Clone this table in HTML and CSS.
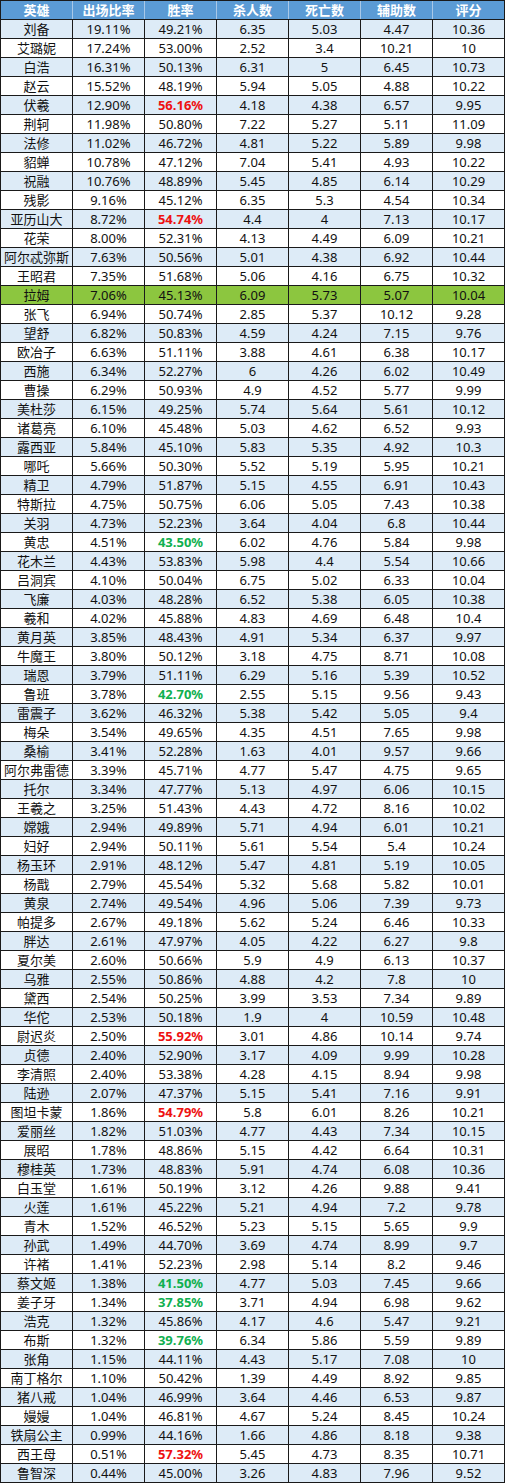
FILE: index.html
```html
<!DOCTYPE html>
<html lang="zh">
<head>
<meta charset="utf-8">
<title>英雄数据</title>
<link rel="stylesheet" href="styles.css">
</head>
<body>
<div class="tbl">
<div class="row hd"><div>英雄</div><div>出场比率</div><div>胜率</div><div>杀人数</div><div>死亡数</div><div>辅助数</div><div>评分</div></div>
<div class="row s"><div>刘备</div><div>19.11%</div><div>49.21%</div><div>6.35</div><div>5.03</div><div>4.47</div><div>10.36</div></div>
<div class="row"><div>艾璐妮</div><div>17.24%</div><div>53.00%</div><div>2.52</div><div>3.4</div><div>10.21</div><div>10</div></div>
<div class="row s"><div>白浩</div><div>16.31%</div><div>50.13%</div><div>6.31</div><div>5</div><div>6.45</div><div>10.73</div></div>
<div class="row"><div>赵云</div><div>15.52%</div><div>48.19%</div><div>5.94</div><div>5.05</div><div>4.88</div><div>10.22</div></div>
<div class="row s"><div>伏羲</div><div>12.90%</div><div class="up">56.16%</div><div>4.18</div><div>4.38</div><div>6.57</div><div>9.95</div></div>
<div class="row"><div>荆轲</div><div>11.98%</div><div>50.80%</div><div>7.22</div><div>5.27</div><div>5.11</div><div>11.09</div></div>
<div class="row s"><div>法修</div><div>11.02%</div><div>46.72%</div><div>4.81</div><div>5.22</div><div>5.89</div><div>9.98</div></div>
<div class="row"><div>貂蝉</div><div>10.78%</div><div>47.12%</div><div>7.04</div><div>5.41</div><div>4.93</div><div>10.22</div></div>
<div class="row s"><div>祝融</div><div>10.76%</div><div>48.89%</div><div>5.45</div><div>4.85</div><div>6.14</div><div>10.29</div></div>
<div class="row"><div>残影</div><div>9.16%</div><div>45.12%</div><div>6.35</div><div>5.3</div><div>4.54</div><div>10.34</div></div>
<div class="row s"><div>亚历山大</div><div>8.72%</div><div class="up">54.74%</div><div>4.4</div><div>4</div><div>7.13</div><div>10.17</div></div>
<div class="row"><div>花荣</div><div>8.00%</div><div>52.31%</div><div>4.13</div><div>4.49</div><div>6.09</div><div>10.21</div></div>
<div class="row s"><div>阿尔忒弥斯</div><div>7.63%</div><div>50.56%</div><div>5.01</div><div>4.38</div><div>6.92</div><div>10.44</div></div>
<div class="row"><div>王昭君</div><div>7.35%</div><div>51.68%</div><div>5.06</div><div>4.16</div><div>6.75</div><div>10.32</div></div>
<div class="row hl"><div>拉姆</div><div>7.06%</div><div>45.13%</div><div>6.09</div><div>5.73</div><div>5.07</div><div>10.04</div></div>
<div class="row"><div>张飞</div><div>6.94%</div><div>50.74%</div><div>2.85</div><div>5.37</div><div>10.12</div><div>9.28</div></div>
<div class="row s"><div>望舒</div><div>6.82%</div><div>50.83%</div><div>4.59</div><div>4.24</div><div>7.15</div><div>9.76</div></div>
<div class="row"><div>欧冶子</div><div>6.63%</div><div>51.11%</div><div>3.88</div><div>4.61</div><div>6.38</div><div>10.17</div></div>
<div class="row s"><div>西施</div><div>6.34%</div><div>52.27%</div><div>6</div><div>4.26</div><div>6.02</div><div>10.49</div></div>
<div class="row"><div>曹操</div><div>6.29%</div><div>50.93%</div><div>4.9</div><div>4.52</div><div>5.77</div><div>9.99</div></div>
<div class="row s"><div>美杜莎</div><div>6.15%</div><div>49.25%</div><div>5.74</div><div>5.64</div><div>5.61</div><div>10.12</div></div>
<div class="row"><div>诸葛亮</div><div>6.10%</div><div>45.48%</div><div>5.03</div><div>4.62</div><div>6.52</div><div>9.93</div></div>
<div class="row s"><div>露西亚</div><div>5.84%</div><div>45.10%</div><div>5.83</div><div>5.35</div><div>4.92</div><div>10.3</div></div>
<div class="row"><div>哪吒</div><div>5.66%</div><div>50.30%</div><div>5.52</div><div>5.19</div><div>5.95</div><div>10.21</div></div>
<div class="row s"><div>精卫</div><div>4.79%</div><div>51.87%</div><div>5.15</div><div>4.55</div><div>6.91</div><div>10.43</div></div>
<div class="row"><div>特斯拉</div><div>4.75%</div><div>50.75%</div><div>6.06</div><div>5.05</div><div>7.43</div><div>10.38</div></div>
<div class="row s"><div>关羽</div><div>4.73%</div><div>52.23%</div><div>3.64</div><div>4.04</div><div>6.8</div><div>10.44</div></div>
<div class="row"><div>黄忠</div><div>4.51%</div><div class="dn">43.50%</div><div>6.02</div><div>4.76</div><div>5.84</div><div>9.98</div></div>
<div class="row s"><div>花木兰</div><div>4.43%</div><div>53.83%</div><div>5.98</div><div>4.4</div><div>5.54</div><div>10.66</div></div>
<div class="row"><div>吕洞宾</div><div>4.10%</div><div>50.04%</div><div>6.75</div><div>5.02</div><div>6.33</div><div>10.04</div></div>
<div class="row s"><div>飞廉</div><div>4.03%</div><div>48.28%</div><div>6.52</div><div>5.38</div><div>6.05</div><div>10.38</div></div>
<div class="row"><div>羲和</div><div>4.02%</div><div>45.88%</div><div>4.83</div><div>4.69</div><div>6.48</div><div>10.4</div></div>
<div class="row s"><div>黄月英</div><div>3.85%</div><div>48.43%</div><div>4.91</div><div>5.34</div><div>6.37</div><div>9.97</div></div>
<div class="row"><div>牛魔王</div><div>3.80%</div><div>50.12%</div><div>3.18</div><div>4.75</div><div>8.71</div><div>10.08</div></div>
<div class="row s"><div>瑞恩</div><div>3.79%</div><div>51.11%</div><div>6.29</div><div>5.16</div><div>5.39</div><div>10.52</div></div>
<div class="row"><div>鲁班</div><div>3.78%</div><div class="dn">42.70%</div><div>2.55</div><div>5.15</div><div>9.56</div><div>9.43</div></div>
<div class="row s"><div>雷震子</div><div>3.62%</div><div>46.32%</div><div>5.38</div><div>5.42</div><div>5.05</div><div>9.4</div></div>
<div class="row"><div>梅朵</div><div>3.54%</div><div>49.65%</div><div>4.35</div><div>4.51</div><div>7.65</div><div>9.98</div></div>
<div class="row s"><div>桑榆</div><div>3.41%</div><div>52.28%</div><div>1.63</div><div>4.01</div><div>9.57</div><div>9.66</div></div>
<div class="row"><div>阿尔弗雷德</div><div>3.39%</div><div>45.71%</div><div>4.77</div><div>5.47</div><div>4.75</div><div>9.65</div></div>
<div class="row s"><div>托尔</div><div>3.34%</div><div>47.77%</div><div>5.13</div><div>4.97</div><div>6.06</div><div>10.15</div></div>
<div class="row"><div>王羲之</div><div>3.25%</div><div>51.43%</div><div>4.43</div><div>4.72</div><div>8.16</div><div>10.02</div></div>
<div class="row s"><div>嫦娥</div><div>2.94%</div><div>49.89%</div><div>5.71</div><div>4.94</div><div>6.01</div><div>10.21</div></div>
<div class="row"><div>妇好</div><div>2.94%</div><div>50.11%</div><div>5.61</div><div>5.54</div><div>5.4</div><div>10.24</div></div>
<div class="row s"><div>杨玉环</div><div>2.91%</div><div>48.12%</div><div>5.47</div><div>4.81</div><div>5.19</div><div>10.05</div></div>
<div class="row"><div>杨戬</div><div>2.79%</div><div>45.54%</div><div>5.32</div><div>5.68</div><div>5.82</div><div>10.01</div></div>
<div class="row s"><div>黄泉</div><div>2.74%</div><div>49.54%</div><div>4.96</div><div>5.06</div><div>7.39</div><div>9.73</div></div>
<div class="row"><div>帕提多</div><div>2.67%</div><div>49.18%</div><div>5.62</div><div>5.24</div><div>6.46</div><div>10.33</div></div>
<div class="row s"><div>胖达</div><div>2.61%</div><div>47.97%</div><div>4.05</div><div>4.22</div><div>6.27</div><div>9.8</div></div>
<div class="row"><div>夏尔美</div><div>2.60%</div><div>50.66%</div><div>5.9</div><div>4.9</div><div>6.13</div><div>10.37</div></div>
<div class="row s"><div>乌雅</div><div>2.55%</div><div>50.86%</div><div>4.88</div><div>4.2</div><div>7.8</div><div>10</div></div>
<div class="row"><div>黛西</div><div>2.54%</div><div>50.25%</div><div>3.99</div><div>3.53</div><div>7.34</div><div>9.89</div></div>
<div class="row s"><div>华佗</div><div>2.53%</div><div>50.18%</div><div>1.9</div><div>4</div><div>10.59</div><div>10.48</div></div>
<div class="row"><div>尉迟炎</div><div>2.50%</div><div class="up">55.92%</div><div>3.01</div><div>4.86</div><div>10.14</div><div>9.74</div></div>
<div class="row s"><div>贞德</div><div>2.40%</div><div>52.90%</div><div>3.17</div><div>4.09</div><div>9.99</div><div>10.28</div></div>
<div class="row"><div>李清照</div><div>2.40%</div><div>53.38%</div><div>4.28</div><div>4.15</div><div>8.94</div><div>9.98</div></div>
<div class="row s"><div>陆逊</div><div>2.07%</div><div>47.37%</div><div>5.15</div><div>5.41</div><div>7.16</div><div>9.91</div></div>
<div class="row"><div>图坦卡蒙</div><div>1.86%</div><div class="up">54.79%</div><div>5.8</div><div>6.01</div><div>8.26</div><div>10.21</div></div>
<div class="row s"><div>爱丽丝</div><div>1.82%</div><div>51.03%</div><div>4.77</div><div>4.43</div><div>7.34</div><div>10.15</div></div>
<div class="row"><div>展昭</div><div>1.78%</div><div>48.86%</div><div>5.15</div><div>4.42</div><div>6.64</div><div>10.31</div></div>
<div class="row s"><div>穆桂英</div><div>1.73%</div><div>48.83%</div><div>5.91</div><div>4.74</div><div>6.08</div><div>10.36</div></div>
<div class="row"><div>白玉堂</div><div>1.61%</div><div>50.19%</div><div>3.12</div><div>4.26</div><div>9.88</div><div>9.41</div></div>
<div class="row s"><div>火莲</div><div>1.61%</div><div>45.22%</div><div>5.21</div><div>4.94</div><div>7.2</div><div>9.78</div></div>
<div class="row"><div>青木</div><div>1.52%</div><div>46.52%</div><div>5.23</div><div>5.15</div><div>5.65</div><div>9.9</div></div>
<div class="row s"><div>孙武</div><div>1.49%</div><div>44.70%</div><div>3.69</div><div>4.74</div><div>8.99</div><div>9.7</div></div>
<div class="row"><div>许褚</div><div>1.41%</div><div>52.23%</div><div>2.98</div><div>5.14</div><div>8.2</div><div>9.46</div></div>
<div class="row s"><div>蔡文姬</div><div>1.38%</div><div class="dn">41.50%</div><div>4.77</div><div>5.03</div><div>7.45</div><div>9.66</div></div>
<div class="row"><div>姜子牙</div><div>1.34%</div><div class="dn">37.85%</div><div>3.71</div><div>4.94</div><div>6.98</div><div>9.62</div></div>
<div class="row s"><div>浩克</div><div>1.32%</div><div>45.86%</div><div>4.17</div><div>4.6</div><div>5.47</div><div>9.21</div></div>
<div class="row"><div>布斯</div><div>1.32%</div><div class="dn">39.76%</div><div>6.34</div><div>5.86</div><div>5.59</div><div>9.89</div></div>
<div class="row s"><div>张角</div><div>1.15%</div><div>44.11%</div><div>4.43</div><div>5.17</div><div>7.08</div><div>10</div></div>
<div class="row"><div>南丁格尔</div><div>1.10%</div><div>50.42%</div><div>1.39</div><div>4.49</div><div>8.92</div><div>9.85</div></div>
<div class="row s"><div>猪八戒</div><div>1.04%</div><div>46.99%</div><div>3.64</div><div>4.46</div><div>6.53</div><div>9.87</div></div>
<div class="row"><div>嫚嫚</div><div>1.04%</div><div>46.81%</div><div>4.67</div><div>5.24</div><div>8.45</div><div>10.24</div></div>
<div class="row s"><div>铁扇公主</div><div>0.99%</div><div>44.16%</div><div>1.66</div><div>4.86</div><div>8.18</div><div>9.38</div></div>
<div class="row"><div>西王母</div><div>0.51%</div><div class="up">57.32%</div><div>5.45</div><div>4.73</div><div>8.35</div><div>10.71</div></div>
<div class="row s"><div>鲁智深</div><div>0.44%</div><div>45.00%</div><div>3.26</div><div>4.83</div><div>7.96</div><div>9.52</div></div>
</div>
</body>
</html>
```
FILE: styles.css
```css
html, body {
  margin: 0;
  padding: 0;
  background: #ffffff;
}

.tbl {
  width: 505px;
  box-sizing: border-box;
  display: flex;
  flex-direction: column;
  gap: 1px;
  padding: 1px;
  background: #1a1a1a;
  font-family: "Noto Sans", "Noto Sans CJK SC", sans-serif;
  font-size: 13px;
  color: #111111;
}

.row {
  display: grid;
  grid-template-columns: repeat(7, 71px);
  gap: 1px;
  background: #1a1a1a;
}

.row > div {
  height: 18px;
  line-height: 18px;
  text-align: center;
  background: #ffffff;
  white-space: nowrap;
  overflow: hidden;
}

.row.s > div {
  background: #ddebf7;
}

.row.hl > div {
  background: #8cc63f;
}

.row.hd {
  background: #a9c8e8;
}

.row.hd > div {
  background: #5b9bd5;
  color: #ffffff;
  font-weight: bold;
}

.row > div.up {
  color: #ee1111;
  font-weight: bold;
}

.row > div.dn {
  color: #10b050;
  font-weight: bold;
}
```
